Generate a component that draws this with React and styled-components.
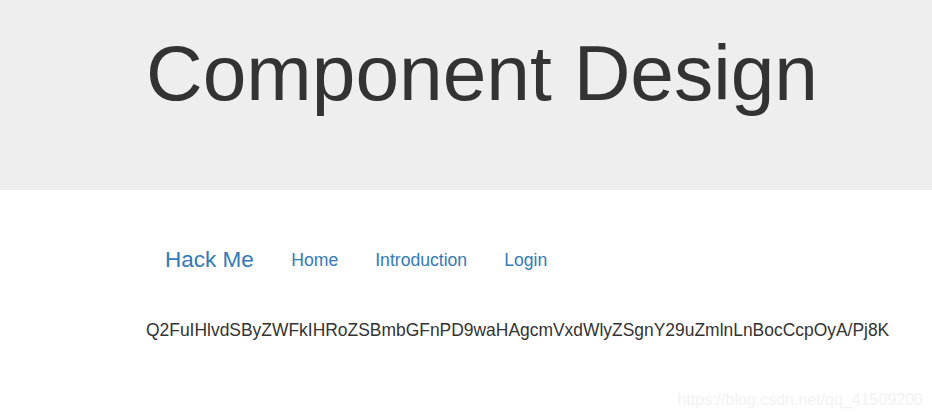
import styled, { createGlobalStyle } from "styled-components";

const GlobalStyle = createGlobalStyle`
  body {
    margin: 0;
    background: #fff;
    font-family: "Liberation Sans", Arial, sans-serif;
    color: #333;
  }
`;

const Page = styled.div`
  position: relative;
  width: 932px;
  height: 415px;
  overflow: hidden;
`;

const Jumbotron = styled.div`
  background: #eee;
  height: 190px;
  box-sizing: border-box;
  padding: 30px 0 0 146px;
`;

const Heading = styled.h1`
  margin: 0;
  font-size: 78.5px;
  font-weight: 400;
  line-height: 1.1;
  color: #333;
`;

const Container = styled.div`
  padding-left: 146px;
`;

const Nav = styled.nav`
  display: flex;
  align-items: center;
  height: 50px;
  margin-top: 45px;
`;

const Brand = styled.a`
  font-size: 22.5px;
  color: #337ab7;
  text-decoration: none;
  padding: 0 19px 0 19px;
`;

const NavLink = styled.a`
  font-size: 17.6px;
  color: #337ab7;
  text-decoration: none;
  padding: 0 18.5px;
`;

const Secret = styled.p`
  margin: 35px 0 0;
  font-size: 17.45px;
  color: #333;
`;

const Watermark = styled.span`
  position: absolute;
  right: 9px;
  bottom: 6px;
  font-size: 16px;
  color: #f2f2f2;
`;

export default function App() {
  return (
    <Page>
      <GlobalStyle />
      <Jumbotron>
        <Heading>Component Design</Heading>
      </Jumbotron>
      <Container>
        <Nav>
          <Brand href="#">Hack Me</Brand>
          <NavLink href="#">Home</NavLink>
          <NavLink href="#">Introduction</NavLink>
          <NavLink href="#">Login</NavLink>
        </Nav>
        <Secret>Q2FuIHlvdSByZWFkIHRoZSBmbGFnPD9waHAgcmVxdWlyZSgnY29uZmlnLnBocCcpOyA/Pj8K</Secret>
      </Container>
      <Watermark>https://blog.csdn.net/qq_41509200</Watermark>
    </Page>
  );
}
